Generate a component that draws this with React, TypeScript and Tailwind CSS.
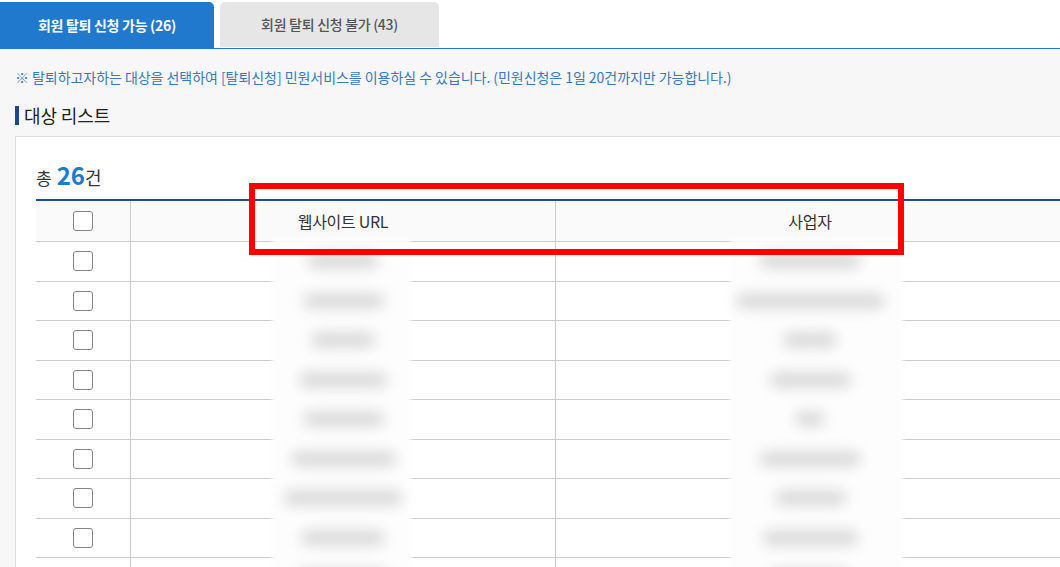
import type { ReactNode } from 'react'

const FONT = "font-['Noto_Sans_CJK_KR','Noto_Sans',sans-serif]"

const ROWS = [
  { url: 70, biz: 100 },
  { url: 81, biz: 149 },
  { url: 64, biz: 54 },
  { url: 88, biz: 81 },
  { url: 81, biz: 30 },
  { url: 105, biz: 101 },
  { url: 118, biz: 71 },
  { url: 84, biz: 95 },
  { url: 90, biz: 80 },
]

function Checkbox() {
  return <span className="block w-[20px] h-[20px] rounded-[3px] border border-[#858585] bg-white" />
}

function Smudge({ w }: { w: number }) {
  return (
    <span
      className="relative z-10 block h-[14px] rounded-full bg-[#d6d6d6] blur-[7px]"
      style={{ width: w }}
    />
  )
}

function Cell({ className, children }: { className: string; children?: ReactNode }) {
  return <div className={`flex items-center justify-center ${className}`}>{children}</div>
}

export default function App() {
  return (
    <div className={`relative w-[1060px] h-[567px] overflow-hidden bg-[#f7f7f7] ${FONT}`}>
      {/* tabs */}
      <div className="bg-white pt-[2px] flex items-start gap-[6px] border-b border-[#2179ce] h-[49px]">
        <div className="w-[214px] h-[46px] bg-[#2179ce] rounded-tr-[5px] flex items-center justify-center text-white text-[14px] font-bold tracking-[-0.3px]">
          회원 탈퇴 신청 가능 (26)
        </div>
        <div className="w-[219px] h-[45px] bg-[#e6e6e6] rounded-t-[5px] flex items-center justify-center text-[#555] text-[14px] font-medium tracking-[-0.3px]">
          회원 탈퇴 신청 불가 (43)
        </div>
      </div>

      <div className="pl-[15px]">
        <p className="pt-[18px] text-[14px] leading-[20px] text-[#3a78c2] tracking-[-0.05px]">
          ※ 탈퇴하고자하는 대상을 선택하여 [탈퇴신청] 민원서비스를 이용하실 수 있습니다. (민원신청은 1일 20건까지만 가능합니다.)
        </p>

        <div className="mt-[17px] flex items-center h-[22px]">
          <span className="w-[4px] h-[19px] bg-[#1b4a86]" />
          <span className="ml-[5px] text-[18px] leading-[22px] text-[#222] tracking-[-0.1px]">대상 리스트</span>
        </div>

        <div className="mt-[10px] w-[1070px] bg-white border border-[#dddddd] px-[20px] pt-[24px]">
          <div className="flex items-baseline h-[28px] leading-[28px] text-[#333]">
            <span className="text-[17px]">총</span>
            <span className="ml-[5px] text-[24px] font-bold text-[#2179ce]">26</span>
            <span className="text-[18px]">건</span>
          </div>

          <div className="mt-[10px] w-[1028px] border-t-2 border-[#1f4f9c]">
            {/* header */}
            <div className="flex h-[41px] bg-[#fafafa] border-b border-[#cccccc] text-[16px] text-[#333] tracking-[-0.3px]">
              <Cell className="w-[95px] border-r border-[#cccccc]">
                <Checkbox />
              </Cell>
              <Cell className="w-[425px] border-r border-[#cccccc]">웹사이트 URL</Cell>
              <Cell className="flex-1">사업자</Cell>
            </div>

            {/* body */}
            <div className="relative">
              <div className="absolute top-[-3px] bottom-0 left-[236px] w-[139px] bg-[#fdfdfd] blur-[2px]" />
              <div className="absolute top-[-3px] bottom-0 left-[694px] w-[173px] bg-[#fdfdfd] blur-[2px]" />
              {ROWS.map((r, i) => (
                <div key={i} className="flex h-[39.5px] border-b border-[#cccccc]">
                  <Cell className="w-[95px] border-r border-[#cccccc]">
                    <Checkbox />
                  </Cell>
                  <Cell className="w-[425px] border-r border-[#cccccc]">
                    <Smudge w={r.url} />
                  </Cell>
                  <Cell className="flex-1">
                    <Smudge w={r.biz} />
                  </Cell>
                </div>
              ))}
            </div>
          </div>
        </div>
      </div>

      {/* red highlight annotation */}
      <div className="absolute left-[249px] top-[183px] w-[655px] h-[72px] border-[6px] border-[#ff0000] z-20" />
    </div>
  )
}
